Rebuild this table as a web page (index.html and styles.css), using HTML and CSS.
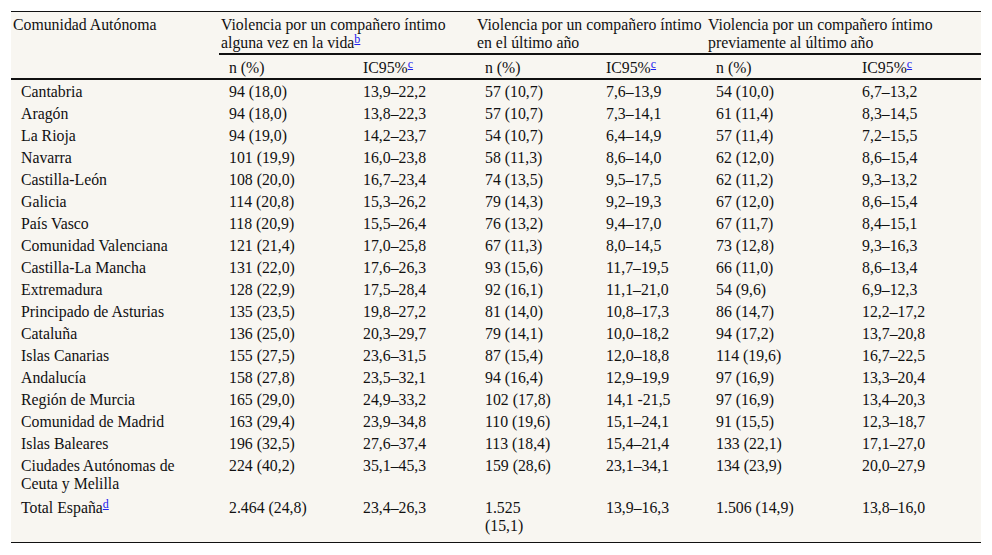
FILE: index.html
```html
<!DOCTYPE html>
<html lang="es">
<head>
<meta charset="utf-8">
<title>Tabla</title>
<link rel="stylesheet" href="styles.css">
</head>
<body>
<div class="wrap">
<table class="tbl">
  <colgroup>
    <col class="c1"><col class="c2"><col class="c3"><col class="c4"><col class="c5"><col class="c6"><col class="c7">
  </colgroup>
  <thead>
    <tr class="hrow1">
      <th class="hcom" rowspan="2">Comunidad Autónoma</th>
      <th class="hgrp" colspan="2">Violencia por un compañero íntimo<br>alguna vez en la vida<sup><a href="#">b</a></sup></th>
      <th class="hgrp" colspan="2">Violencia por un compañero íntimo<br>en el último año</th>
      <th class="hgrp" colspan="2">Violencia por un compañero íntimo<br>previamente al último año</th>
    </tr>
    <tr class="hrow2">
      <th class="hsub">n (%)</th><th class="hsub">IC95%<sup><a href="#">c</a></sup></th>
      <th class="hsub">n (%)</th><th class="hsub">IC95%<sup><a href="#">c</a></sup></th>
      <th class="hsub">n (%)</th><th class="hsub">IC95%<sup><a href="#">c</a></sup></th>
    </tr>
  </thead>
  <tbody>
    <tr><td>Cantabria</td><td>94 (18,0)</td><td>13,9–22,2</td><td>57 (10,7)</td><td>7,6–13,9</td><td>54 (10,0)</td><td>6,7–13,2</td></tr>
    <tr><td>Aragón</td><td>94 (18,0)</td><td>13,8–22,3</td><td>57 (10,7)</td><td>7,3–14,1</td><td>61 (11,4)</td><td>8,3–14,5</td></tr>
    <tr><td>La Rioja</td><td>94 (19,0)</td><td>14,2–23,7</td><td>54 (10,7)</td><td>6,4–14,9</td><td>57 (11,4)</td><td>7,2–15,5</td></tr>
    <tr><td>Navarra</td><td>101 (19,9)</td><td>16,0–23,8</td><td>58 (11,3)</td><td>8,6–14,0</td><td>62 (12,0)</td><td>8,6–15,4</td></tr>
    <tr><td>Castilla-León</td><td>108 (20,0)</td><td>16,7–23,4</td><td>74 (13,5)</td><td>9,5–17,5</td><td>62 (11,2)</td><td>9,3–13,2</td></tr>
    <tr><td>Galicia</td><td>114 (20,8)</td><td>15,3–26,2</td><td>79 (14,3)</td><td>9,2–19,3</td><td>67 (12,0)</td><td>8,6–15,4</td></tr>
    <tr><td>País Vasco</td><td>118 (20,9)</td><td>15,5–26,4</td><td>76 (13,2)</td><td>9,4–17,0</td><td>67 (11,7)</td><td>8,4–15,1</td></tr>
    <tr><td>Comunidad Valenciana</td><td>121 (21,4)</td><td>17,0–25,8</td><td>67 (11,3)</td><td>8,0–14,5</td><td>73 (12,8)</td><td>9,3–16,3</td></tr>
    <tr><td>Castilla-La Mancha</td><td>131 (22,0)</td><td>17,6–26,3</td><td>93 (15,6)</td><td>11,7–19,5</td><td>66 (11,0)</td><td>8,6–13,4</td></tr>
    <tr><td>Extremadura</td><td>128 (22,9)</td><td>17,5–28,4</td><td>92 (16,1)</td><td>11,1–21,0</td><td>54 (9,6)</td><td>6,9–12,3</td></tr>
    <tr><td>Principado de Asturias</td><td>135 (23,5)</td><td>19,8–27,2</td><td>81 (14,0)</td><td>10,8–17,3</td><td>86 (14,7)</td><td>12,2–17,2</td></tr>
    <tr><td>Cataluña</td><td>136 (25,0)</td><td>20,3–29,7</td><td>79 (14,1)</td><td>10,0–18,2</td><td>94 (17,2)</td><td>13,7–20,8</td></tr>
    <tr><td>Islas Canarias</td><td>155 (27,5)</td><td>23,6–31,5</td><td>87 (15,4)</td><td>12,0–18,8</td><td>114 (19,6)</td><td>16,7–22,5</td></tr>
    <tr><td>Andalucía</td><td>158 (27,8)</td><td>23,5–32,1</td><td>94 (16,4)</td><td>12,9–19,9</td><td>97 (16,9)</td><td>13,3–20,4</td></tr>
    <tr><td>Región de Murcia</td><td>165 (29,0)</td><td>24,9–33,2</td><td>102 (17,8)</td><td>14,1 -21,5</td><td>97 (16,9)</td><td>13,4–20,3</td></tr>
    <tr><td>Comunidad de Madrid</td><td>163 (29,4)</td><td>23,9–34,8</td><td>110 (19,6)</td><td>15,1–24,1</td><td>91 (15,5)</td><td>12,3–18,7</td></tr>
    <tr><td>Islas Baleares</td><td>196 (32,5)</td><td>27,6–37,4</td><td>113 (18,4)</td><td>15,4–21,4</td><td>133 (22,1)</td><td>17,1–27,0</td></tr>
    <tr><td>Ciudades Autónomas de<br>Ceuta y Melilla</td><td>224 (40,2)</td><td>35,1–45,3</td><td>159 (28,6)</td><td>23,1–34,1</td><td>134 (23,9)</td><td>20,0–27,9</td></tr>
    <tr class="total"><td>Total España<sup><a href="#">d</a></sup></td><td>2.464 (24,8)</td><td>23,4–26,3</td><td>1.525<br>(15,1)</td><td>13,9–16,3</td><td>1.506 (14,9)</td><td>13,8–16,0</td></tr>
  </tbody>
</table>
</div>
</body>
</html>
```

FILE: styles.css
```css
html, body {
  margin: 0;
  padding: 0;
  background: #ffffff;
}
.wrap {
  padding: 11px;
}
.tbl {
  width: 970px;
  table-layout: fixed;
  border-collapse: separate;
  border-spacing: 0;
  background: #f8f6f1;
  border-top: 1px solid #111;
  border-bottom: 1px solid #111;
  font-family: "Liberation Serif", "Times New Roman", serif;
  font-size: 15.8px;
  line-height: 18px;
  color: #111;
}
.c1 { width: 208px; }
.c2 { width: 134px; }
.c3 { width: 122px; }
.c4 { width: 121px; }
.c5 { width: 110px; }
.c6 { width: 146px; }
.c7 { width: 129px; }
.tbl th {
  font-weight: normal;
  text-align: left;
  vertical-align: top;
  white-space: nowrap;
}
.hcom {
  padding: 4px 2px 1px 2px;
  border-bottom: 2px solid #111;
}
.hgrp {
  padding: 4px 2px 1px 2px;
  border-bottom: 2px solid #111;
}
.hsub {
  padding: 4px 2px 1px 10px;
  border-bottom: 2px solid #111;
}
.tbl td {
  padding: 3px 2px 1px 10px;
  vertical-align: top;
  white-space: nowrap;
}
.tbl .total td {
  padding-top: 5px;
  padding-bottom: 7px;
}
sup {
  font-size: 12px;
  line-height: 0;
  vertical-align: 5px;
}
sup a {
  color: #2020ee;
  text-decoration: underline;
}
```
